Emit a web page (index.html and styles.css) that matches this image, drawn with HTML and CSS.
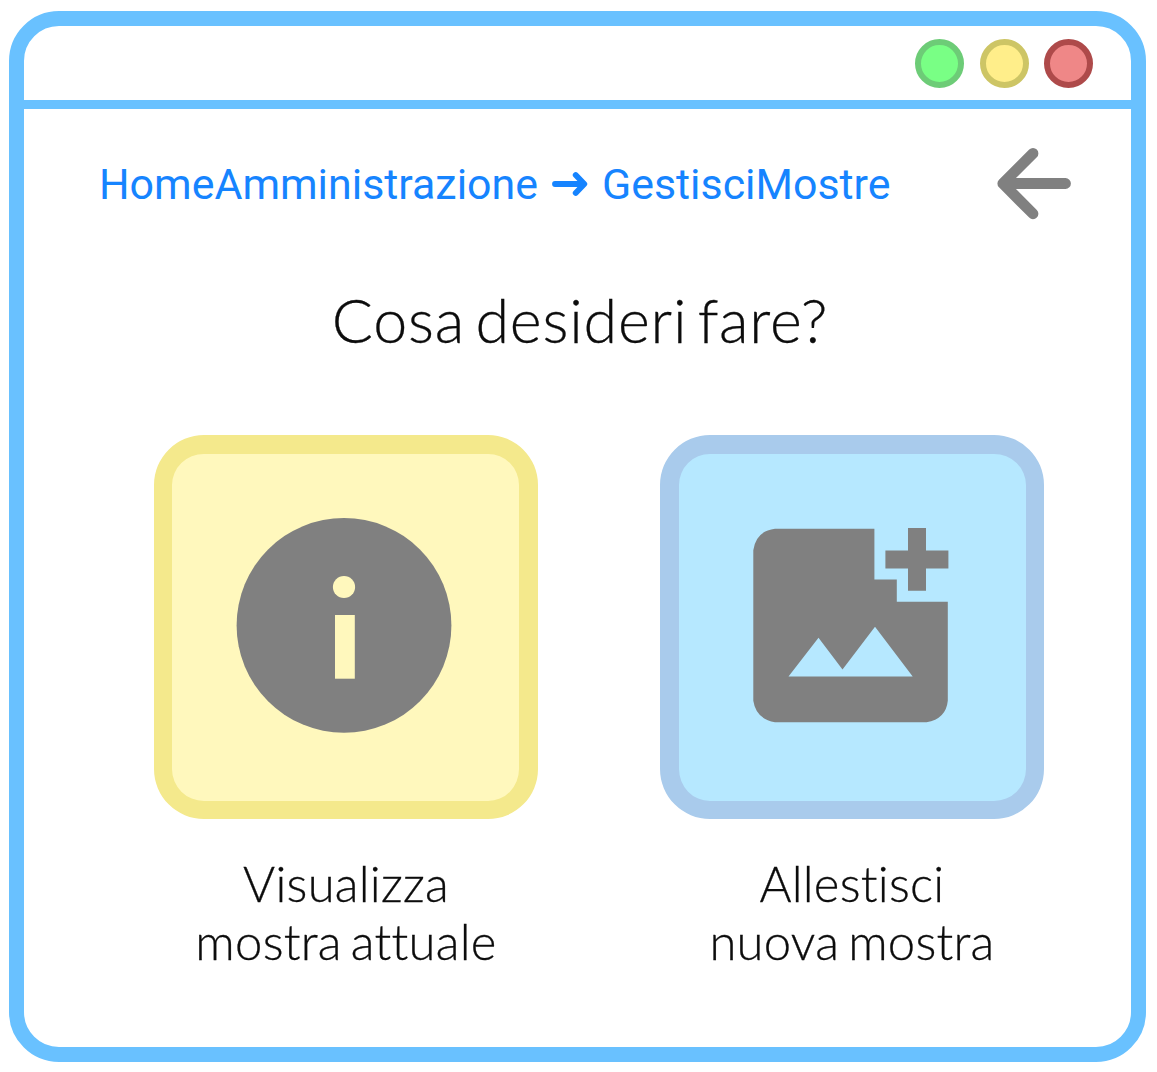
FILE: index.html
```html
<!DOCTYPE html>
<html lang="it">
<head>
<meta charset="utf-8">
<title>GestisciMostre</title>
<link rel="stylesheet" href="styles.css">
</head>
<body>
<div class="window">
  <header class="titlebar">
    <span class="dot dot-green"></span>
    <span class="dot dot-yellow"></span>
    <span class="dot dot-red"></span>
  </header>
  <nav class="navigation">
    <div class="breadcrumb">
      <span class="crumb-home">HomeAmministrazione</span>
      <svg class="crumb-arrow" width="36" height="26" viewBox="0 0 36 26"><path d="M3 13H31M23.7 4.1L32.3 13L23.7 21.9" fill="none" stroke="currentColor" stroke-width="5.8" stroke-linecap="round" stroke-linejoin="round"/></svg>
      <span class="crumb-current">GestisciMostre</span>
    </div>
    <svg class="back" width="74" height="72" viewBox="0 0 74 72"><path d="M68.5 35.5H7M36 5.4L5.8 35.5L36 65.8" fill="none" stroke="currentColor" stroke-width="10.8" stroke-linecap="round" stroke-linejoin="round"/><path d="M5 35.5L18 27.5V43.5Z" fill="currentColor"/></svg>
  </nav>
  <h1 class="question">Cosa desideri fare?</h1>
  <main class="choices">
    <section class="choice">
      <div class="tile tile-yellow">
        <svg width="384" height="384" viewBox="0 0 384 384"><circle cx="190" cy="190.4" r="107.4" fill="currentColor"/><circle cx="190" cy="152" r="11.1" fill="#fff8bd"/><rect x="181" y="180" width="19.8" height="63.7" fill="#fff8bd"/></svg>
      </div>
      <p class="label label-view">Visualizza<br>mostra attuale</p>
    </section>
    <section class="choice">
      <div class="tile tile-blue">
        <svg width="384" height="384" viewBox="0 0 384 384"><path fill="currentColor" fill-rule="evenodd" d="M115 93.7H214.4V144.4H236.8V166.7H287.8V265.8Q286 284 266.5 287.3H115Q96 284 93.3 265.8V115.2Q96 96 115 93.7ZM128.5 241.6H252.7L215 191.8L182.5 234.5L158.5 202.7ZM248 93H266V115.4H288.4V133.6H266V155.7H248V133.6H225.4V115.4H248Z"/></svg>
      </div>
      <p class="label label-create">Allestisci<br>nuova mostra</p>
    </section>
  </main>
</div>
</body>
</html>
```
FILE: styles.css
```css
* { box-sizing: border-box; }

body {
  margin: 0;
  padding: 11px 11px 10px 9px;
  background: #fff;
}

.window {
  width: 1137px;
  height: 1051px;
  border: 15px solid #69c1ff;
  border-radius: 50px;
  background: #fff;
}

.titlebar {
  display: flex;
  justify-content: flex-end;
  height: 83px;
  padding: 13px 38px 0 0;
  border-bottom: 9px solid #69c1ff;
}

.dot {
  width: 49px;
  height: 49px;
  border: 6px solid;
  border-radius: 50%;
}

.dot-green { background: #79ff85; border-color: #6dcc77; margin-right: 16px; }
.dot-yellow { background: #ffee8a; border-color: #cdc565; margin-right: 15px; }
.dot-red { background: #ef8787; border-color: #ae4a4a; }

.navigation {
  display: flex;
  justify-content: space-between;
  align-items: center;
  height: 72px;
  margin: 39px 60px 0 75px;
}

.breadcrumb {
  display: flex;
  align-items: center;
  color: #1684ff;
  font: 400 42.9px/52px Roboto, sans-serif;
  white-space: nowrap;
}

.crumb-arrow { margin: 0 14px; }

.back { color: #808080; }

.question {
  height: 72px;
  margin: 64px 0 0 5px;
  color: #0c0c0c;
  font: 300 61px/72px Lato, sans-serif;
  letter-spacing: 0.8px;
  word-spacing: -7px;
  text-align: center;
  -webkit-text-stroke: 0.3px;
}

.choices {
  display: flex;
  gap: 122px;
  margin: 79px 0 0 130px;
}

.choice { width: 384px; }

.tile {
  height: 384px;
  border: 18px solid;
  border-top-width: 19px;
  border-radius: 50px;
}

.tile svg {
  display: block;
  margin: -19px -18px -18px;
  color: #808080;
}

.tile-yellow { background: #fff8bd; border-color: #f4e98c; border-right-width: 19px; }
.tile-blue { background: #b6e8ff; border-color: #a9cbec; border-left-width: 19px; }
.tile-blue svg { margin-left: -19px; }

.label {
  margin: 35px 0 0;
  color: #0c0c0c;
  font: 300 49px/58px Lato, sans-serif;
  font-variant-ligatures: none;
  letter-spacing: 0.25px;
  word-spacing: -4.5px;
  text-align: center;
  -webkit-text-stroke: 0.3px;
}
```
